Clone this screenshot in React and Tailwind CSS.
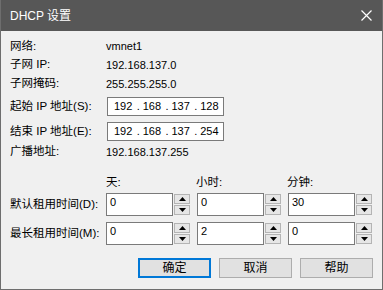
import React from "react";

const font = { fontFamily: '"Liberation Sans", "Noto Sans CJK SC", sans-serif' };

function IpBox({ parts }) {
  return (
    <div className="w-[117px] h-[19px] border border-[#7a7a7a] bg-white flex items-center pl-[6px] text-[11px] text-black">
      {parts.map((p, i) => (
        <React.Fragment key={i}>
          <span className="w-[23px]">{p}</span>
          {i < parts.length - 1 && <span className="w-[6px]">.</span>}
        </React.Fragment>
      ))}
    </div>
  );
}

function Spin({ value }) {
  return (
    <div className="flex h-[23px] w-[84px]">
      <div className="flex-1 border border-[#7a7a7a] bg-white pl-[3px] pt-[1px] text-[11px] text-black leading-[14px]">
        {value}
      </div>
      <div className="w-[17px] flex flex-col justify-between py-[1px] pl-[1px]">
        <div className="h-[10px] border border-[#b4b4b4] bg-[#e6e6e6] flex items-center justify-center">
          <svg width="7" height="4" viewBox="0 0 7 4">
            <path d="M0 4 L3.5 0 L7 4 Z" fill="#000" />
          </svg>
        </div>
        <div className="h-[10px] border border-[#b4b4b4] bg-[#e6e6e6] flex items-center justify-center">
          <svg width="7" height="4" viewBox="0 0 7 4">
            <path d="M0 0 L3.5 4 L7 0 Z" fill="#000" />
          </svg>
        </div>
      </div>
    </div>
  );
}

export default function App() {
  const info = [
    { label: "网络:", value: "vmnet1", h: "h-[19px]" },
    { label: "子网 IP:", value: "192.168.137.0", h: "h-[18px]" },
    { label: "子网掩码:", value: "255.255.255.0", h: "h-[20px]" },
  ];

  return (
    <div style={font} className="w-[383px] h-[290px] flex flex-col bg-[#f0f0f0] border-x border-b border-[#6e6e6e] text-black">
      {/* title bar */}
      <div className="h-[31px] bg-[#575757] flex items-center justify-between pl-[9px] pr-[10px] text-white text-[12px]">
        <span>DHCP 设置</span>
        <svg width="11" height="11" viewBox="0 0 11 11">
          <path d="M0.5 0.5 L10.5 10.5 M10.5 0.5 L0.5 10.5" stroke="#fff" strokeWidth="1.2" />
        </svg>
      </div>

      <div className="flex-1 flex flex-col pl-[9px] pr-[9px] pt-[6px] text-[11px]">
        {info.map((r) => (
          <div key={r.label} className={`${r.h} flex items-center`}>
            <span className="w-[96px] text-[11.5px]">{r.label}</span>
            <span>{r.value}</span>
          </div>
        ))}

        <div className="mt-[3px] flex items-center">
          <span className="w-[97px] text-[11.5px]">起始 IP 地址(S):</span>
          <IpBox parts={["192", "168", "137", "128"]} />
        </div>
        <div className="mt-[6px] flex items-center">
          <span className="w-[97px] text-[11.5px]">结束 IP 地址(E):</span>
          <IpBox parts={["192", "168", "137", "254"]} />
        </div>

        <div className="h-[22px] flex items-center">
          <span className="w-[96px] text-[11.5px]">广播地址:</span>
          <span>192.168.137.255</span>
        </div>

        <div className="mt-[10px] h-[20px] flex items-center pl-[96px] gap-[7px] text-[11.5px]">
          <span className="w-[84px]">天:</span>
          <span className="w-[84px] -ml-[1px]">小时:</span>
          <span className="w-[84px]">分钟:</span>
        </div>

        <div className="flex items-center gap-[7px]">
          <span className="w-[89px] text-[11.5px] whitespace-nowrap">默认租用时间(D):</span>
          <Spin value="0" />
          <Spin value="0" />
          <Spin value="30" />
        </div>
        <div className="mt-[6px] flex items-center gap-[7px]">
          <span className="w-[89px] text-[11.5px] whitespace-nowrap">最长租用时间(M):</span>
          <Spin value="0" />
          <Spin value="2" />
          <Spin value="0" />
        </div>

        <div className="mt-[13px] flex justify-end gap-[8px] text-[12px]">
          <button className="w-[73px] h-[20px] border-2 border-[#0078d7] bg-[#e1e1e1] flex items-center justify-center">
            确定
          </button>
          <button className="w-[73px] h-[20px] border border-[#adadad] bg-[#e1e1e1] flex items-center justify-center">
            取消
          </button>
          <button className="w-[73px] h-[20px] border border-[#adadad] bg-[#e1e1e1] flex items-center justify-center">
            帮助
          </button>
        </div>
      </div>
    </div>
  );
}
